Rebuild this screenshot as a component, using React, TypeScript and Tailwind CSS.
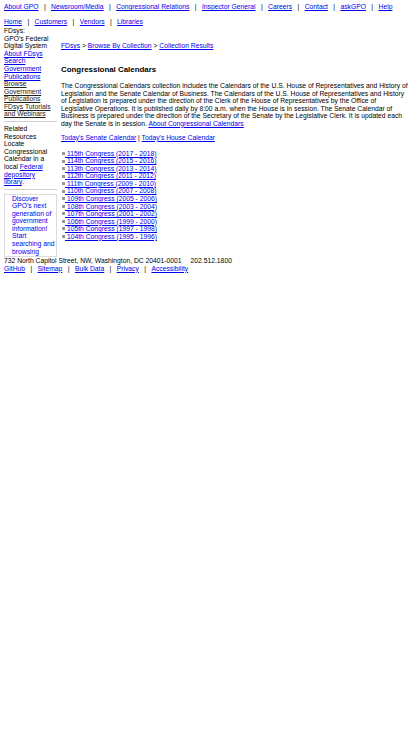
const topLinks = ["About GPO", "Newsroom/Media", "Congressional Relations", "Inspector General", "Careers", "Contact", "askGPO", "Help"];
const subLinks = ["Home", "Customers", "Vendors", "Libraries"];
const footerLinks = ["GitHub", "Sitemap", "Bulk Data", "Privacy", "Accessibility"];

const congresses = [
  "115th Congress (2017 - 2018)",
  "114th Congress (2015 - 2016)",
  "113th Congress (2013 - 2014)",
  "112th Congress (2011 - 2012)",
  "111th Congress (2009 - 2010)",
  "110th Congress (2007 - 2008)",
  "109th Congress (2005 - 2006)",
  "108th Congress (2003 - 2004)",
  "107th Congress (2001 - 2002)",
  "106th Congress (1999 - 2000)",
  "105th Congress (1997 - 1998)",
  "104th Congress (1995 - 1996)",
];

function Link({ children, dark }: { children: React.ReactNode; dark?: boolean }) {
  return (
    <a href="#" className={`underline ${dark ? "text-[#222]" : "text-[#0000ee]"}`}>
      {children}
    </a>
  );
}

function NavRow({ items }: { items: string[] }) {
  return (
    <div className="flex">
      {items.map((item, i) => (
        <span key={item} className="flex">
          {i > 0 && <span className="mx-[5.4px]">|</span>}
          <Link>{item}</Link>
        </span>
      ))}
    </div>
  );
}

export default function App() {
  return (
    <div className="min-h-[732px] bg-white px-[4px] pt-[3px] font-['Liberation_Sans',Arial,sans-serif] text-[6.75px] leading-[7.55px] text-black">
      <NavRow items={topLinks} />
      <div className="mt-[7.65px]">
        <NavRow items={subLinks} />
      </div>

      <div className="mt-[1.5px] flex gap-[4px]">
        {/* sidebar */}
        <div className="w-[53px] shrink-0">
          <div className="pr-[2px]">
            <div>FDsys:</div>
            <div>GPO's Federal Digital System</div>
            <div><Link>About FDsys</Link></div>
            <div><Link>Search Government Publications</Link></div>
            <div><Link dark>Browse Government Publications</Link></div>
            <div><Link dark>FDsys Tutorials and Webinars</Link></div>
          </div>
          <div className="mt-[3px] mb-[3.5px] border-t border-[#d0d0d0]" />
          <div className="pr-[2px]">
            <div>Related Resources</div>
            <div>
              Locate Congressional Calendar in a local <Link>Federal depository library</Link>.
            </div>
          </div>
          <div className="mt-[3.5px] border-t border-[#d0d0d0]" />
          <div className="mt-[3.5px] border border-[#dcdcdc] pl-[7px] pb-[1px] text-[#0000ee]">
            <div>Discover GPO's next generation of government information!</div>
            <div>Start searching and browsing</div>
          </div>
        </div>

        {/* main */}
        <div className="flex-1">
          <div className="mt-[15px]">
            <Link>FDsys</Link> &gt; <Link>Browse By Collection</Link> &gt; <Link>Collection Results</Link>
          </div>
          <h1 className="mt-[15.5px] text-[7.9px] font-bold leading-[9px]">Congressional Calendars</h1>
          <p className="mt-[7.7px]">
            The Congressional Calendars collection includes the Calendars of the U.S. House of Representatives and History of
            Legislation and the Senate Calendar of Business. The Calendars of the U.S. House of Representatives and History
            of Legislation is prepared under the direction of the Clerk of the House of Representatives by the Office of
            Legislative Operations. It is published daily by 8:00 a.m. when the House is in session. The Senate Calendar of
            Business is prepared under the direction of the Secretary of the Senate by the Legislative Clerk. It is updated each
            day the Senate is in session. <Link>About Congressional Calendars</Link>
          </p>
          <p className="mt-[6.5px]">
            <Link>Today's Senate Calendar</Link> | <Link>Today's House Calendar</Link>
          </p>
          <ul className="mt-[8.4px]">
            {congresses.map((c) => (
              <li key={c} className="flex items-center">
                <span className="ml-[1px] inline-block h-[3px] w-[3px] bg-[#9a9a9a]" />
                <Link>&nbsp;{c}</Link>
              </li>
            ))}
          </ul>
        </div>
      </div>

      <div className="flex">
        <span>732 North Capitol Street, NW, Washington, DC 20401-0001</span>
        <span className="ml-[9px]">202.512.1800</span>
      </div>
      <NavRow items={footerLinks} />
    </div>
  );
}
